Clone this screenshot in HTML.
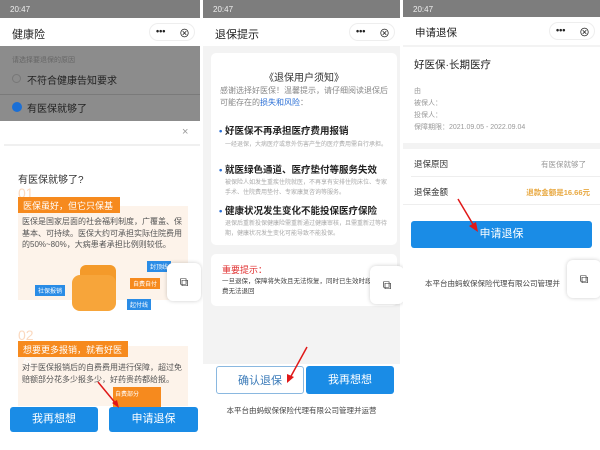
<!DOCTYPE html><html><head><meta charset="utf-8"><style>
*{margin:0;padding:0;box-sizing:border-box}
body{width:600px;height:450px;overflow:hidden;background:#fff;font-family:"Liberation Sans","Noto Sans CJK SC",sans-serif;position:relative}
.a{position:absolute}
.sb{background:#7d7d7d;color:#eee;font-size:8px;height:18px;padding:5px 10px}
.nav{position:relative;background:#fff;height:28px;font-size:11px;color:#222;padding:8px 12px}
.cap{position:absolute;right:5px;top:5px;width:46px;height:18px;border:1px solid #eee;border-radius:9px;font-size:9px}
.btn{position:absolute;background:#1a8ce6;color:#fff;border-radius:3px;text-align:center;font-size:11px}
.float{position:absolute;width:34px;height:38px;background:#fff;border-radius:6px;box-shadow:0 0 4px rgba(0,0,0,.2);font-size:12px;text-align:center;line-height:38px;color:#333}
</style></head><body>
<!-- panel1 -->
<div class="a" style="left:0;top:0;width:200px;height:450px;background:#fff">
<div class="sb">20:47</div>
<div class="nav">健康险<div class="cap"><span class="a" style="left:6px;top:2px;font-weight:bold">•••</span><span class="a" style="left:29px;top:1px;font-size:11px">⊗</span></div></div>
<div class="a" style="top:46px;left:0;width:200px;height:75px;background:#8c8c8c">
<div class="a" style="left:12px;top:9px;font-size:7px;color:#666">请选择要退保的原因</div>
<div class="a" style="left:12px;top:28px;width:9px;height:9px;border:1px solid #777;border-radius:50%"></div>
<div class="a" style="left:27px;top:26px;font-size:10px;color:#222">不符合健康告知要求</div>
<div class="a" style="left:0;top:48px;width:200px;height:1px;background:#7a7a7a"></div>
<div class="a" style="left:12px;top:56px;width:10px;height:10px;background:#1a6fd6;border-radius:50%"></div>
<div class="a" style="left:27px;top:54px;font-size:10px;color:#222">有医保就够了</div></div>
<div class="a" style="left:182px;top:126px;font-size:11px;color:#999">×</div>
<div class="a" style="left:4px;top:144px;width:196px;height:2px;background:#f0f0f0"></div>
<div class="a" style="left:18px;top:171px;font-size:10px;color:#333">有医保就够了?</div>
<div class="a" style="left:18px;top:185px;font-size:14px;color:#fbd9bf">01</div>
<div class="a" style="left:18px;top:206px;width:170px;height:94px;background:#fdf3ea"></div>
<div class="a" style="left:18px;top:197px;width:102px;height:16px;background:#f68a1e;color:#fff;font-size:9px;padding:2px 5px">医保虽好，但它只保基本</div>
<div class="a" style="left:22px;top:216px;width:166px;font-size:8px;color:#555;line-height:11.5px">医保是国家层面的社会福利制度，广覆盖、保基本、可持续。医保大约可承担实际住院费用的50%~80%，大病患者承担比例则较低。</div>
<div class="a" style="left:80px;top:265px;width:36px;height:24px;background:#f49a2a;border-radius:6px"></div>
<div class="a" style="left:72px;top:275px;width:44px;height:36px;background:#f7a53a;border-radius:8px"></div>
<div class="a" style="left:35px;top:285px;background:#2a8ce6;color:#fff;font-size:6px;padding:1px 3px">社保报销</div>
<div class="a" style="left:147px;top:261px;background:#2a8ce6;color:#fff;font-size:6px;padding:1px 3px">封顶线</div>
<div class="a" style="left:130px;top:278px;background:#f68a1e;color:#fff;font-size:6px;padding:1px 3px">自费自付</div>
<div class="a" style="left:127px;top:299px;background:#2a8ce6;color:#fff;font-size:6px;padding:1px 3px">起付线</div>
<div class="float" style="left:167px;top:263px">⧉</div>
<div class="a" style="left:18px;top:327px;font-size:14px;color:#fbd9bf">02</div>
<div class="a" style="left:18px;top:346px;width:170px;height:60px;background:#fdf3ea"></div>
<div class="a" style="left:18px;top:341px;width:110px;height:16px;background:#f68a1e;color:#fff;font-size:9px;padding:2px 5px">想要更多报销，就看好医保</div>
<div class="a" style="left:22px;top:362px;width:166px;font-size:8px;color:#555;line-height:11.5px">对于医保报销后的自费费用进行保障，超过免赔额部分花多少报多少，好药贵药都给报。</div>
<div class="a" style="left:113px;top:387px;width:48px;height:20px;background:#f68a1e;color:#fff;font-size:6px;padding:2px">自费部分</div>
<div class="btn" style="left:10px;top:407px;width:88px;height:25px;line-height:25px">我再想想</div>
<div class="btn" style="left:109px;top:407px;width:89px;height:25px;line-height:25px">申请退保</div>
<svg class="a" style="left:95px;top:380px" width="30" height="30"><path d="M3 2L22 25" stroke="#e01818" stroke-width="1.5"/><path d="M24 28L17 23L22 20Z" fill="#e01818"/></svg>
</div>
<!-- panel2 -->
<div class="a" style="left:203px;top:0;width:197px;height:450px;background:#fff">
<div class="sb">20:47</div>
<div class="nav">退保提示<div class="cap"><span class="a" style="left:6px;top:2px;font-weight:bold">•••</span><span class="a" style="left:29px;top:1px;font-size:11px">⊗</span></div></div>
<div class="a" style="top:46px;left:0;width:197px;height:318px;background:#f3f3f3"></div>
<div class="a" style="left:8px;top:53px;width:186px;height:192px;background:#fff;border-radius:5px">
<div class="a" style="left:0;width:186px;top:16px;text-align:center;font-size:10px;color:#333">《退保用户须知》</div>
<div class="a" style="left:9px;top:32px;width:172px;font-size:8px;color:#888;line-height:12px">感谢选择好医保！温馨提示，请仔细阅读退保后可能存在的<span style="color:#2a6fd6">损失和风险</span>：</div>
<div class="a" style="left:8px;top:70px;font-size:9.5px;color:#222;font-weight:bold"><span style="color:#2a6fd6">•</span> 好医保不再承担医疗费用报销</div>
<div class="a" style="left:14px;top:86px;font-size:6px;color:#aaa">一经退保，大病医疗或意外伤害产生的医疗费用需自行承担。</div>
<div class="a" style="left:8px;top:109px;font-size:9.5px;color:#222;font-weight:bold"><span style="color:#2a6fd6">•</span> 就医绿色通道、医疗垫付等服务失效</div>
<div class="a" style="left:14px;top:125px;width:165px;font-size:6px;color:#aaa;line-height:10px">被保险人如发生重疾住院就医，不再享有安排住院床位、专家手术、住院费用垫付、专家康复咨询等服务。</div>
<div class="a" style="left:8px;top:150px;font-size:9.5px;color:#222;font-weight:bold"><span style="color:#2a6fd6">•</span> 健康状况发生变化不能投保医疗保险</div>
<div class="a" style="left:14px;top:166px;width:165px;font-size:6px;color:#aaa;line-height:10px">退保后重新投保健康险需重新通过健康审核，且需重新过等待期，健康状况发生变化可能导致不能投保。</div></div>
<div class="a" style="left:8px;top:254px;width:186px;height:52px;background:#fff;border-radius:5px">
<div class="a" style="left:11px;top:9px;font-size:9px;color:#e03030">重要提示：</div>
<div class="a" style="left:11px;top:23px;width:160px;font-size:6.5px;color:#444;line-height:10px">一旦退保，保障将失效且无法恢复，同时已生效时段保费无法退回</div></div>
<div class="float" style="left:167px;top:266px">⧉</div>
<div class="btn" style="left:13px;top:366px;width:88px;height:28px;line-height:28px;background:#fff;border:1px solid #8ab8e0;color:#3a7ab8">确认退保</div>
<div class="btn" style="left:103px;top:366px;width:88px;height:28px;line-height:28px">我再想想</div>
<svg class="a" style="top:345px;left:78px" width="30" height="45"><path d="M26 2L9 33" stroke="#e01818" stroke-width="1.5"/><path d="M6 38L6 29L13 32Z" fill="#e01818"/></svg>
<div class="a" style="left:0;width:197px;top:405px;text-align:center;font-size:7.5px;color:#444">本平台由蚂蚁保保险代理有限公司管理并运营</div>
</div>
<!-- panel3 -->
<div class="a" style="left:403px;top:0;width:197px;height:450px;background:#fff">
<div class="sb" style="height:17px">20:47</div>
<div class="nav" style="font-size:10.5px">申请退保<div class="cap"><span class="a" style="left:6px;top:2px;font-weight:bold">•••</span><span class="a" style="left:29px;top:1px;font-size:11px">⊗</span></div></div>
<div class="a" style="left:0;top:45px;width:197px;height:2px;background:#f3f3f3"></div>
<div class="a" style="left:11px;top:57px;font-size:10.5px;color:#222">好医保·长期医疗</div>
<div class="a" style="left:11px;top:86px;font-size:7px;color:#999;line-height:12px">由<br>被保人：<br>投保人：<br>保障期限：2021.09.05 - 2022.09.04</div>
<div class="a" style="left:0;top:143px;width:197px;height:6px;background:#f3f3f3"></div>
<div class="a" style="left:11px;top:158px;font-size:8.5px;color:#333">退保原因</div>
<div class="a" style="right:14px;top:159px;font-size:7.5px;color:#999">有医保就够了</div>
<div class="a" style="left:8px;top:176px;width:189px;height:1px;background:#eee"></div>
<div class="a" style="left:11px;top:186px;font-size:8.5px;color:#333">退保金额</div>
<div class="a" style="right:10px;top:187px;font-size:7.5px;color:#e8a840;font-weight:bold">退款金额是16.66元</div>
<div class="a" style="left:0;top:204px;width:197px;height:1px;background:#eee"></div>
<div class="btn" style="left:8px;top:221px;width:181px;height:27px;line-height:27px">申请退保</div>
<svg class="a" style="left:52px;top:196px" width="30" height="40"><path d="M3 3L19 30" stroke="#e01818" stroke-width="1.5"/><path d="M23 36L14 30L21 26Z" fill="#e01818"/></svg>
<div class="a" style="left:22px;top:278px;font-size:7.5px;color:#444">本平台由蚂蚁保保险代理有限公司管理并</div>
<div class="float" style="left:164px;top:260px">⧉</div>
</div>
</body></html>
